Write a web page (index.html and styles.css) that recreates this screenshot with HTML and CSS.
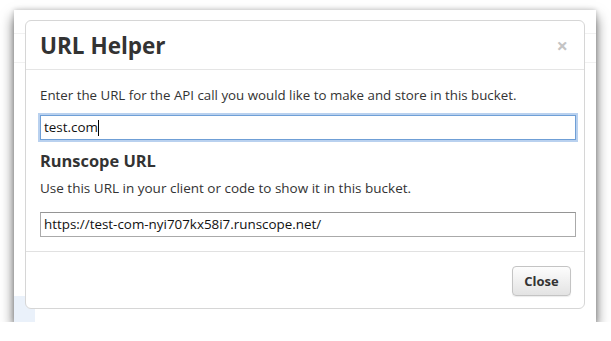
FILE: index.html
```html
<!DOCTYPE html>
<html>

<head>
  <meta charset="UTF-8">
  <title>URL Helper</title>
  <link rel="stylesheet" href="styles.css">
</head>

<body>
  <div class="ventana">
    <div class="modal">
      <div class="modal-header">
        <h3>URL Helper</h3>
        <span class="cerrar">&times;</span>
      </div>

      <div class="modal-body">
        <p>Enter the URL for the API call you would like to make and store in this bucket.</p>
        <div class="campo campo-activo">test.com<span class="cursor"></span></div>

        <h4>Runscope URL</h4>
        <p class="ayuda">Use this URL in your client or code to show it in this bucket.</p>
        <div class="campo">https://test-com-nyi707kx58i7.runscope.net/</div>
      </div>

      <div class="modal-footer">
        <button class="boton">Close</button>
      </div>
    </div>
  </div>
</body>

</html>
```

FILE: styles.css
```css
body {
  margin: 0;
  padding: 10px 0 0 14px;
  background-color: #ffffff;
  font-family: 'Open Sans', sans-serif;
  color: #333333;
}

/* ventana de fondo con la página detrás */
.ventana {
  width: 582px;
  height: 312px;
  padding: 10px 0 0 11px;
  box-sizing: border-box;
  background-color: #ffffff;
  background-image:
    linear-gradient(#eaf1fa, #eaf1fa),
    linear-gradient(#f1f1f1, #f1f1f1),
    linear-gradient(#f1f1f1, #f1f1f1);
  background-size: 21px 26px, 100% 1px, 100% 1px;
  background-position: 0 100%, 0 23px, 0 52px;
  background-repeat: no-repeat;
  box-shadow: 0 7px 12px rgba(0, 0, 0, 0.6), 0 0 5px rgba(0, 0, 0, 0.2);
}

.modal {
  width: 560px;
  height: 289px;
  box-sizing: border-box;
  background-color: #ffffff;
  border: 1px solid #d6d6d6;
  border-radius: 6px;
  display: flex;
  flex-direction: column;
}

.modal-header {
  height: 49px;
  box-sizing: border-box;
  border-bottom: 1px solid #e5e5e5;
  padding: 0 14px;
  display: flex;
  align-items: center;
  justify-content: space-between;
}

.modal-header h3 {
  margin: 0;
  font-size: 22.5px;
  font-weight: bold;
  color: #333333;
}

.cerrar {
  font-size: 20px;
  font-weight: bold;
  color: #c4c4c4;
  margin-right: 2px;
}

.modal-body {
  padding: 16px 8px 0 14px;
  height: 182px;
  box-sizing: border-box;
  border-bottom: 1px solid #e1e1e1;
}

.modal-body p {
  margin: 0 0 11px 0;
  font-size: 13.3px;
  line-height: 18px;
}

.modal-body h4 {
  margin: 10px 0 7px 0;
  font-size: 16.4px;
  line-height: 22px;
  font-weight: bold;
}

.modal-body .ayuda {
  font-size: 13.5px;
  margin-bottom: 15px;
}

.campo {
  width: 536px;
  height: 25px;
  box-sizing: border-box;
  border: 1px solid #aaaaaa;
  border-top-color: #959595;
  padding: 0 3px;
  font-size: 13.4px;
  line-height: 23px;
  color: #111111;
  display: flex;
  align-items: center;
}

.campo-activo {
  border-color: #6f9fd6;
  box-shadow: 0 0 0 2px rgba(128, 172, 226, 0.55);
}

.cursor {
  display: inline-block;
  width: 1px;
  height: 16px;
  background-color: #000000;
}

.modal-footer {
  flex: 1;
  display: flex;
  justify-content: flex-end;
  align-items: flex-start;
  padding: 14px 13px 0 0;
}

.boton {
  width: 59px;
  height: 30px;
  font-family: 'Open Sans', sans-serif;
  font-size: 13px;
  font-weight: bold;
  color: #333333;
  background: linear-gradient(#fdfdfd, #e3e3e3);
  border: 1px solid #c4c4c4;
  border-radius: 4px;
  box-shadow: 0 1px 1px rgba(0, 0, 0, 0.08);
  cursor: pointer;
}
```
